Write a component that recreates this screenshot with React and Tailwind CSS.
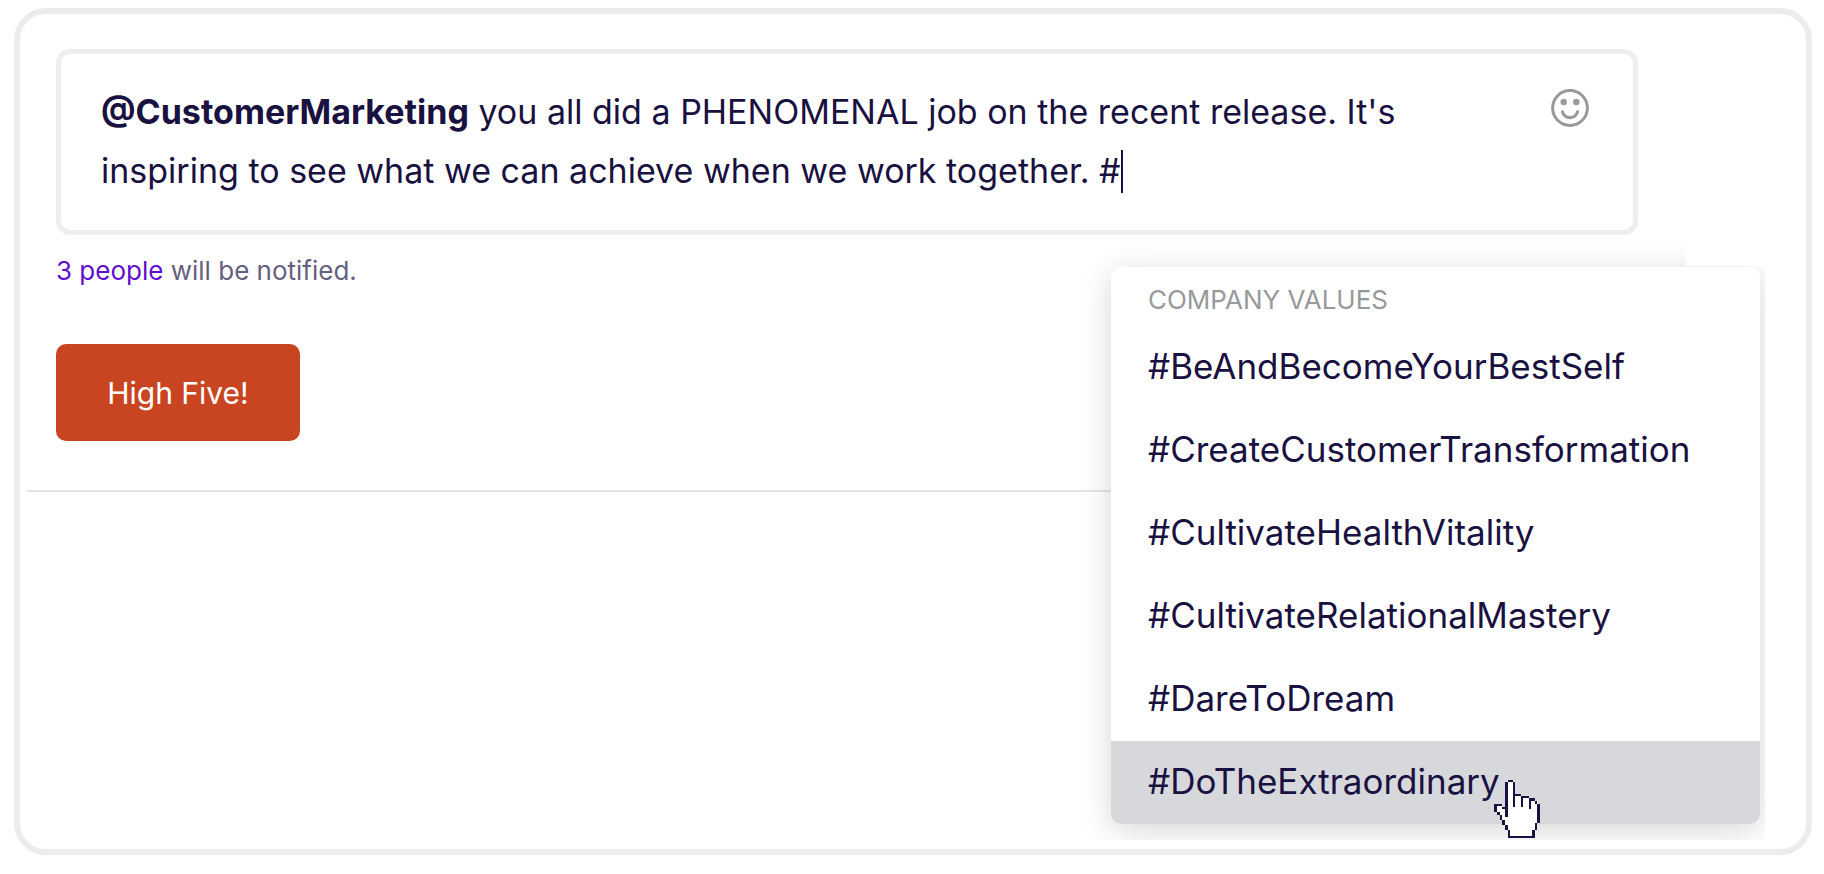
const values = [
  "#BeAndBecomeYourBestSelf",
  "#CreateCustomerTransformation",
  "#CultivateHealthVitality",
  "#CultivateRelationalMastery",
  "#DareToDream",
  "#DoTheExtraordinary",
];

function SmileIcon() {
  return (
    <svg viewBox="0 0 38 38" className="size-[38px]" fill="none" aria-hidden="true">
      <circle cx="19" cy="19" r="17.4" stroke="#98999d" strokeWidth="3" />
      <circle cx="12.7" cy="13" r="3.2" fill="#98999d" />
      <circle cx="25.3" cy="13" r="3.2" fill="#98999d" />
      <path d="M11.4 22.8c1.200 3.700 4 5.900 7.600 5.900s6.400-2.200 7.600-5.900" stroke="#98999d" strokeWidth="3" strokeLinecap="round" />
    </svg>
  );
}

function HandPointer() {
  return (
    <svg viewBox="103 155 138 177" className="h-[59px] w-[46px]" shapeRendering="crispEdges" aria-hidden="true">
      <path
        fill="#fff"
        d="M144 159H163V200H187V207H211V214H228V222H236V284H229V306H221V326H148V306H140V290H132V275H124V260H116V250H108V232H128V240H140V159Z"
      />
      <path
        fill="#191140"
        d="M144 156h15v6h-15zM136 162h8v104h-8zM159 162h8v74h-8zM167 196h17v7h-17zM184 203h7v33h-7zM191 204h16v6h-16zM207 210h8v32h-8zM215 210h10v7h-10zM225 217h8v10h-8zM233 227h7v57h-7zM225 284h8v22h-8zM217 306h8v18h-8zM144 322h81v8h-81zM144 306h8v18h-8zM136 290h8v16h-8zM128 275h8v15h-8zM120 260h8v15h-8zM112 250h8v10h-8zM104 230h8v20h-8zM104 228h24v6h-24zM128 235h8v7h-8z"
      />
    </svg>
  );
}

export default function App() {
  return (
    <div className="flex min-h-screen bg-white pt-2 pr-3 pb-[19px] pl-[14px] font-['Inter',sans-serif] text-[#191140]">
      <main className="relative flex-1 rounded-[32px] border-[6px] border-[#ebecee] pt-[35px]">
        <form className="pr-[168px] pl-9" onSubmit={(e) => e.preventDefault()}>
          <div className="flex items-start justify-between rounded-[14px] border-[5px] border-[#eee] pt-[28px] pr-[44px] pb-[30px] pl-10">
            <div
              role="textbox"
              aria-label="Recognition message"
              aria-multiline="true"
              className="text-[34px] leading-[59px]"
            >
              <strong className="font-bold">@CustomerMarketing</strong> you all did a PHENOMENAL job on the recent
              release. It's
              <br />
              inspiring to see what we can achieve when we work together. #
              <span className="inline-block h-[43px] w-[2px] bg-[#191140] align-[-10px]" />
            </div>
            <button type="button" aria-label="Insert emoji" className="mt-[7px] shrink-0">
              <SmileIcon />
            </button>
          </div>
          <p className="mt-[18px] text-[26px] leading-9 text-[#655f80]">
            <a href="#people" className="text-[#5f0fd0]">3 people</a> will be notified.
          </p>
          <button
            type="submit"
            className="mt-[55px] h-[97px] w-[244px] rounded-[10px] bg-[#c94521] text-[30px] leading-9 text-white"
          >
            High Five!
          </button>
        </form>
        <hr className="mt-[49px] mr-[60px] ml-[7px] border-t-2 border-[#e4e4e6]" />

        <section
          aria-label="Company values"
          className="absolute top-[253px] right-[46px] w-[649px] rounded-[10px] bg-white shadow-[0_6px_32px_rgba(0,0,0,0.16)] [clip-path:polygon(-40px_-40px,575px_-40px,575px_-1px,654px_-1px,654px_573px,-40px_573px)]"
        >
          <h2 className="px-[37px] pt-[15px] pb-2 text-[26px] leading-9 text-[#98999b]">COMPANY VALUES</h2>
          <ul>
            {values.map((value) => (
              <li key={value}>
                <button
                  type="button"
                  className="flex h-[83px] w-full items-center px-[37px] pb-[2px] text-left text-[35px] leading-[59px] aria-[current=true]:rounded-b-[10px] aria-[current=true]:bg-[#d7d8dc]"
                  aria-current={value === "#DoTheExtraordinary"}
                >
                  {value}
                </button>
              </li>
            ))}
          </ul>
          <div className="absolute right-[220px] bottom-[-15px]">
            <HandPointer />
          </div>
        </section>
      </main>
    </div>
  );
}
